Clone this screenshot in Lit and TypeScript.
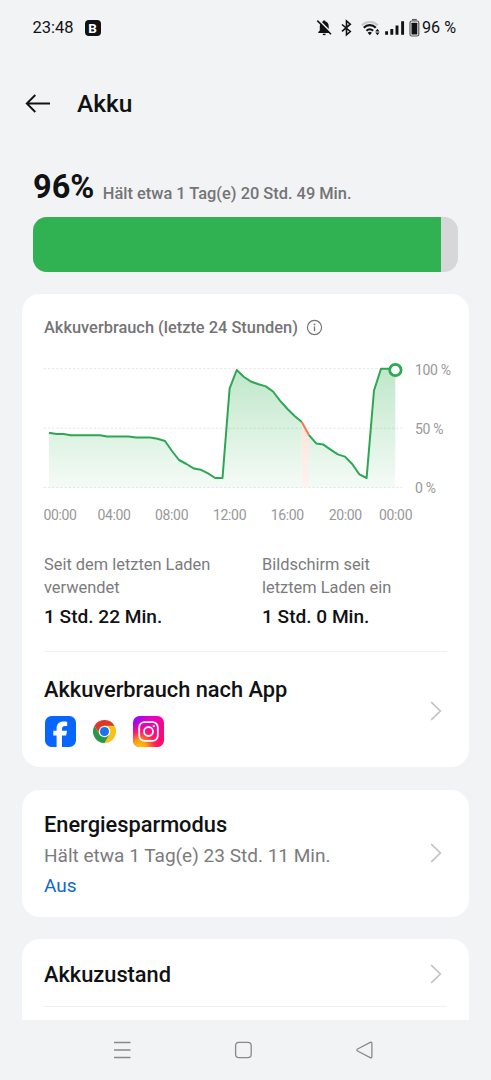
import { LitElement, html, svg, css } from "lit";
import { customElement } from "lit/decorators.js";

const LEVELS: [number, number][] = [
  [49, 432.8], [56.5, 434], [63.5, 434], [71, 435.3], [100, 435.3], [107, 436.5],
  [128.5, 436.5], [136, 437.6], [150, 437.6], [157.5, 438.8], [165, 441], [172, 451],
  [179, 460], [186.5, 464], [194, 468.6], [201, 469.8], [208, 473.4], [215.3, 478], [222.5, 478],
  [229.6, 388.6], [236.7, 370], [244, 377], [251.5, 381.8], [258.6, 384.2], [265.8, 386.4],
  [273, 391.5], [280.2, 400.8], [287.5, 409], [294.6, 416], [301.8, 422],
  [308.8, 434.8], [316.2, 443.4], [323.4, 444.6], [330.6, 449.6], [337.8, 454.4],
  [345, 456.6], [352.2, 464], [359.4, 474.4], [366.6, 478], [374, 390.5], [381, 368.8], [395.3, 368.8],
];
const HOT = 29;
const pts = (list: [number, number][]) => list.map((p) => p.join(",")).join(" ");
const area = (list: [number, number][]) =>
  `${list[0][0]},487.5 ${pts(list)} ${list[list.length - 1][0]},487.5`;

const TIMES: [number, string][] = [
  [60, "00:00"], [114, "04:00"], [171.6, "08:00"], [229.6, "12:00"],
  [287.2, "16:00"], [345.2, "20:00"], [395.6, "00:00"],
];

@customElement("battery-chart")
export class BatteryChart extends LitElement {
  static styles = css`
    :host { display: block; }
    .plot { display: block; overflow: visible; }
    .grid { stroke: #e6e6e8; stroke-width: 1; stroke-dasharray: 2.4 1.8; }
    .line { fill: none; stroke: #2fa556; stroke-width: 2; stroke-linejoin: round; }
    .hot { stroke: #ee7a50; }
    .dot { fill: #fff; stroke: #2ea854; stroke-width: 2.8; }
    .label { font: 14px Roboto, sans-serif; letter-spacing: -.35px; fill: #98989a; }
    .mid { text-anchor: middle; }
  `;
  render() {
    return html`<svg class="plot" width="403" height="172" viewBox="44 356 403 172">
      <defs>
        <linearGradient id="g" gradientUnits="userSpaceOnUse" x1="0" y1="368" x2="0" y2="488">
          <stop offset="0" stop-color="#2fb152" stop-opacity=".31" />
          <stop offset="1" stop-color="#2fb152" stop-opacity=".05" />
        </linearGradient>
        <linearGradient id="h" x1="0" y1="0" x2="0" y2="1">
          <stop offset="0" stop-color="#fce3dc" />
          <stop offset="1" stop-color="#fef3f0" />
        </linearGradient>
      </defs>
      ${[368.7, 428.2, 487.4].map((y) => svg`<line class="grid" x1="43.5" x2="402" y1=${y} y2=${y} />`)}
      <polygon fill="url(#g)" points=${area(LEVELS.slice(0, HOT + 1))} />
      <polygon fill="url(#h)" points=${area(LEVELS.slice(HOT, HOT + 2))} />
      <polygon fill="url(#g)" points=${area(LEVELS.slice(HOT + 1))} />
      <polyline class="line" points=${pts(LEVELS.slice(0, HOT + 1))} />
      <polyline class="line" points=${pts(LEVELS.slice(HOT + 1))} />
      <polyline class="line hot" points=${pts(LEVELS.slice(HOT, HOT + 2))} />
      <circle class="dot" cx="395.4" cy="370" r="5.7" />
      <text class="label" x="415" y="374.5">100 %</text>
      <text class="label" x="415" y="433.6">50 %</text>
      <text class="label" x="415" y="493">0 %</text>
      ${TIMES.map(([x, t]) => svg`<text class="label mid" x=${x} y="520">${t}</text>`)}
    </svg>`;
  }
}

const chevron = html`<svg width="12" height="20" viewBox="0 0 12 20" fill="none" stroke="#c2c2c4" stroke-width="1.6">
  <path d="M1.2 1.2 10.4 10 1.2 18.8" /></svg>`;

const facebook = html`<svg width="31" height="31" viewBox="0 0 31 31">
  <rect width="31" height="31" rx="6.5" fill="#0866ff" />
  <path fill="#fff" d="M11.6 31V19.5H8.3v-4.7h3.3v-2.1c0-5 2.5-7.2 7.3-7.2 1 0 2.6.2 3.3.4v4.1c-.4 0-1-.1-1.8-.1-2.5 0-3.4 1-3.4 3.2v1.7h5l-.9 4.7h-4.1V31z" />
</svg>`;

const chrome = html`<svg width="23" height="23" viewBox="0 0 48 48">
  <path fill="#d93a2b" d="M24 24 3.2 12A24 24 0 0 1 44.8 12z" />
  <path fill="#fbc116" d="M24 24V12H44.8A24 24 0 0 1 24 48L34.4 30z" />
  <path fill="#279847" d="M24 24 34.4 30 24 48A24 24 0 0 1 3.2 12L13.6 30z" />
  <path fill="#d93a2b" d="M3.2 12 13.6 30 24 24V12z" />
  <circle cx="24" cy="24" r="12" fill="#fff" />
  <circle cx="24" cy="24" r="9.5" fill="#1c72e8" />
</svg>`;

const instagram = html`<svg width="31" height="31" viewBox="0 0 31 31">
  <defs>
    <linearGradient id="ia" x1="0" y1="0" x2="1" y2=".7">
      <stop offset="0" stop-color="#7a10ff" /><stop offset=".4" stop-color="#e800c8" />
      <stop offset="1" stop-color="#ff0a6c" />
    </linearGradient>
    <radialGradient id="ib" cx=".2" cy="1.05" r=".85">
      <stop offset="0" stop-color="#ffd000" /><stop offset=".3" stop-color="#ffa010" />
      <stop offset=".62" stop-color="#ff2a50" stop-opacity=".8" /><stop offset="1" stop-color="#ff0070" stop-opacity="0" />
    </radialGradient>
  </defs>
  <rect width="31" height="31" rx="6.5" fill="url(#ia)" />
  <rect width="31" height="31" rx="6.5" fill="url(#ib)" />
  <rect x="6.2" y="6.2" width="18.6" height="18.6" rx="5.2" fill="none" stroke="#fff" stroke-width="1.8" />
  <circle cx="15.5" cy="15.5" r="4.5" fill="none" stroke="#fff" stroke-width="1.8" />
  <circle cx="20.8" cy="10.2" r="1.15" fill="#fff" />
</svg>`;

@customElement("app-root")
export class AppRoot extends LitElement {
  static styles = css`
    :host {
      display: flex; flex-direction: column; width: 491px; height: 1080px; overflow: hidden;
      background: #f2f3f5; color: #111213; font-family: Roboto, sans-serif; box-sizing: border-box;
    }
    svg { display: block; flex: none; }
    .status { display: flex; align-items: center; height: 55px; padding: 0 34px 0 32.5px; font-size: 16.5px; flex: none; }
    .badge { margin-left: 11px; width: 16px; height: 16px; border-radius: 4px; background: #111213; color: #fff;
      font: 700 13.5px/16px Roboto, sans-serif; text-align: center; }
    .signals { margin-left: auto; }
    .pct { margin-left: 1px; margin-right: 1px; font-size: 16.2px; }
    .title { display: flex; align-items: center; height: 98px; padding-left: 25px; gap: 26px; flex: none;
      font-size: 24.5px; font-weight: 500; padding-bottom: 2px; box-sizing: border-box; }
    .level { display: flex; align-items: flex-start; height: 64px; padding-left: 33px; gap: 8.5px; flex: none; box-sizing: border-box; }
    .big { font-size: 32.5px; font-weight: 700; line-height: 38px; padding-top: 15px; }
    .est { font-size: 16.4px; line-height: 20px; padding-top: 31px; font-weight: 500; color: #747476; }
    .bar { height: 54.5px; margin: 0 33px; border-radius: 14px; background: #d7d7d9; overflow: hidden; flex: none; }
    .fill { height: 100%; background: #30b152; }
    .content { display: flex; flex-direction: column; gap: 22.5px; flex: 1; min-height: 0; overflow: hidden; padding: 22px 22px 0; }
    .card { background: #fff; border-radius: 18px; padding: 0 22px; flex: none; box-sizing: border-box; }
    .usage { height: 473.5px; }
    .caption { display: flex; align-items: center; gap: 8px; height: 62.5px; padding-top: 5px; box-sizing: border-box;
      font-size: 16.4px; font-weight: 500; color: #747476; }
    .stats { display: grid; grid-template-columns: 218px 1fr; padding-top: 26px; height: 97px; }
    .what { font-size: 16.4px; line-height: 22.5px; color: #7b7b7d; }
    .value { font-size: 19.1px; line-height: 22px; font-weight: 500; margin-top: 7px; }
    .rule { height: 1px; background: #f0f0f1; }
    .row { display: flex; align-items: center; justify-content: space-between; padding-right: 5px; }
    .name { font-size: 21.8px; line-height: 26px; font-weight: 500; }
    .apps { display: flex; align-items: center; gap: 17px; margin-top: 13px; padding-left: 1px; }
    .byapp { padding-top: 25px; }
    .byapp > svg { margin-bottom: 2px; }
    .saver { height: 127px; padding: 22px 27px 0 22px; display: flex; justify-content: space-between; }
    .sub { font-size: 19.05px; line-height: 30px; color: #7b7b7d; margin-top: 3.5px; }
    .state { font-size: 19px; line-height: 30px; color: #1066d0; }
    .push { margin-top: 31.5px; }
    .health { height: 140px; }
    .tall { height: 67px; padding-top: 3px; box-sizing: border-box; }
    .tall .name { padding-top: 2px; }
    .nav { height: 60px; flex: none; }
  `;
  render() {
    return html`
      <div class="status">
        <span>23:48</span><span class="badge">B</span>
        <svg class="signals" width="106" height="24" viewBox="315 15 106 24" fill="none" stroke="#111213" stroke-width="1.5">
          <path fill="#111213" stroke="none" d="M318.3 32v-1l1.5-1.5v-4.2c0-2.5 1.3-4.4 3.4-5v-.9h2v.9c2.2.6 3.5 2.5 3.5 5v4.2l1.5 1.5v1zM322.6 32.7h3.2a1.6 1.6 0 0 1-3.2 0z" />
          <path stroke="#f2f3f5" stroke-width="1.6" d="M318.3 18.6 331.6 31.9" />
          <path d="M317.3 19.6 331 33.3" stroke-width="1.5" />
          <path d="M342 23.5 350.3 30.5 346.5 33.8V20L350.3 23.2 342 30.3" stroke-width="1.6" />
          <path stroke="#c6c7c9" stroke-width="2" d="M361.8 24.2a11.6 11.6 0 0 1 16 0" />
          <path stroke-width="2.2" d="M363.8 26.700a8.400 8.400 0 0 1 12 0M366.500 29.700a4.800 4.800 0 0 1 6.600 0" />
          <path fill="#111213" stroke="none" d="M367.7 31.700q2.100-1.700 4.200 0l-2.100 2.500zM375.3 30.400l2.100-2.700 2.100 2.700zM375.3 31.500l2.100 2.700 2.100-2.700z" />
          <path stroke-width="2.9" d="M386.6 33.8v-3.6M391.8 33.8v-5.800M397 33.8V24.600M402.600 33.8V20.200" />
          <rect x="410" y="20" width="8.8" height="15" rx="1.8" stroke-width="1.2" stroke="#5a5b5c" />
          <path d="M412 18.7h4.8" stroke-width="1.5" stroke="#5a5b5c" />
          <rect x="411.5" y="21.7" width="5.8" height="11.8" rx=".6" fill="#111213" stroke="none" />
        </svg>
        <span class="pct">96 %</span>
      </div>
      <div class="title">
        <svg width="26" height="20" viewBox="0 0 26 20" fill="none" stroke="#111213" stroke-width="1.9">
          <path d="M25 10.5H2M10.3 2 1.8 10.5 10.3 19" />
        </svg>
        <span>Akku</span>
      </div>
      <div class="level"><span class="big">96%</span><span class="est">Hält etwa 1 Tag(e) 20 Std. 49 Min.</span></div>
      <div class="bar"><div class="fill" style="width:96%"></div></div>
      <div class="content">
        <section class="card usage">
          <div class="caption">
            <span>Akkuverbrauch (letzte 24 Stunden)</span>
            <svg width="17" height="17" viewBox="0 0 17 17">
              <circle cx="8.5" cy="8.5" r="7.1" fill="none" stroke="#747476" stroke-width="1.2" />
              <circle cx="8.5" cy="5.4" r=".9" fill="#747476" />
              <path d="M8.5 7.4v4.8" stroke="#747476" stroke-width="1.3" />
            </svg>
          </div>
          <battery-chart></battery-chart>
          <div class="stats">
            <div><div class="what">Seit dem letzten Laden<br />verwendet</div><div class="value">1 Std. 22 Min.</div></div>
            <div><div class="what">Bildschirm seit<br />letztem Laden ein</div><div class="value">1 Std. 0 Min.</div></div>
          </div>
          <div class="rule"></div>
          <div class="row byapp">
            <div>
              <div class="name">Akkuverbrauch nach App</div>
              <div class="apps">${facebook}${chrome}${instagram}</div>
            </div>
            ${chevron}
          </div>
        </section>
        <section class="card saver">
          <div>
            <div class="name">Energiesparmodus</div>
            <div class="sub">Hält etwa 1 Tag(e) 23 Std. 11 Min.</div>
            <div class="state">Aus</div>
          </div>
          <div class="push">${chevron}</div>
        </section>
        <section class="card health">
          <div class="row tall"><span class="name">Akkuzustand</span>${chevron}</div>
          <div class="rule"></div>
        </section>
      </div>
      <svg class="nav" width="491" height="60" viewBox="0 1020 491 60" fill="none" stroke="#88898b" stroke-width="1.3">
        <path d="M114 1042.5h16.500M114 1050h16.500M114 1057.500h16.500" />
        <rect x="235.6" y="1042.4" width="15.6" height="15.2" rx="3.3" />
        <path d="M357.6 1049 370.2 1042.4q1.700-.6 1.700 1.200v12.800q0 1.800-1.700 1.200L357.600 1051q-1.500-1 0-2z" />
      </svg>
    `;
  }
}
